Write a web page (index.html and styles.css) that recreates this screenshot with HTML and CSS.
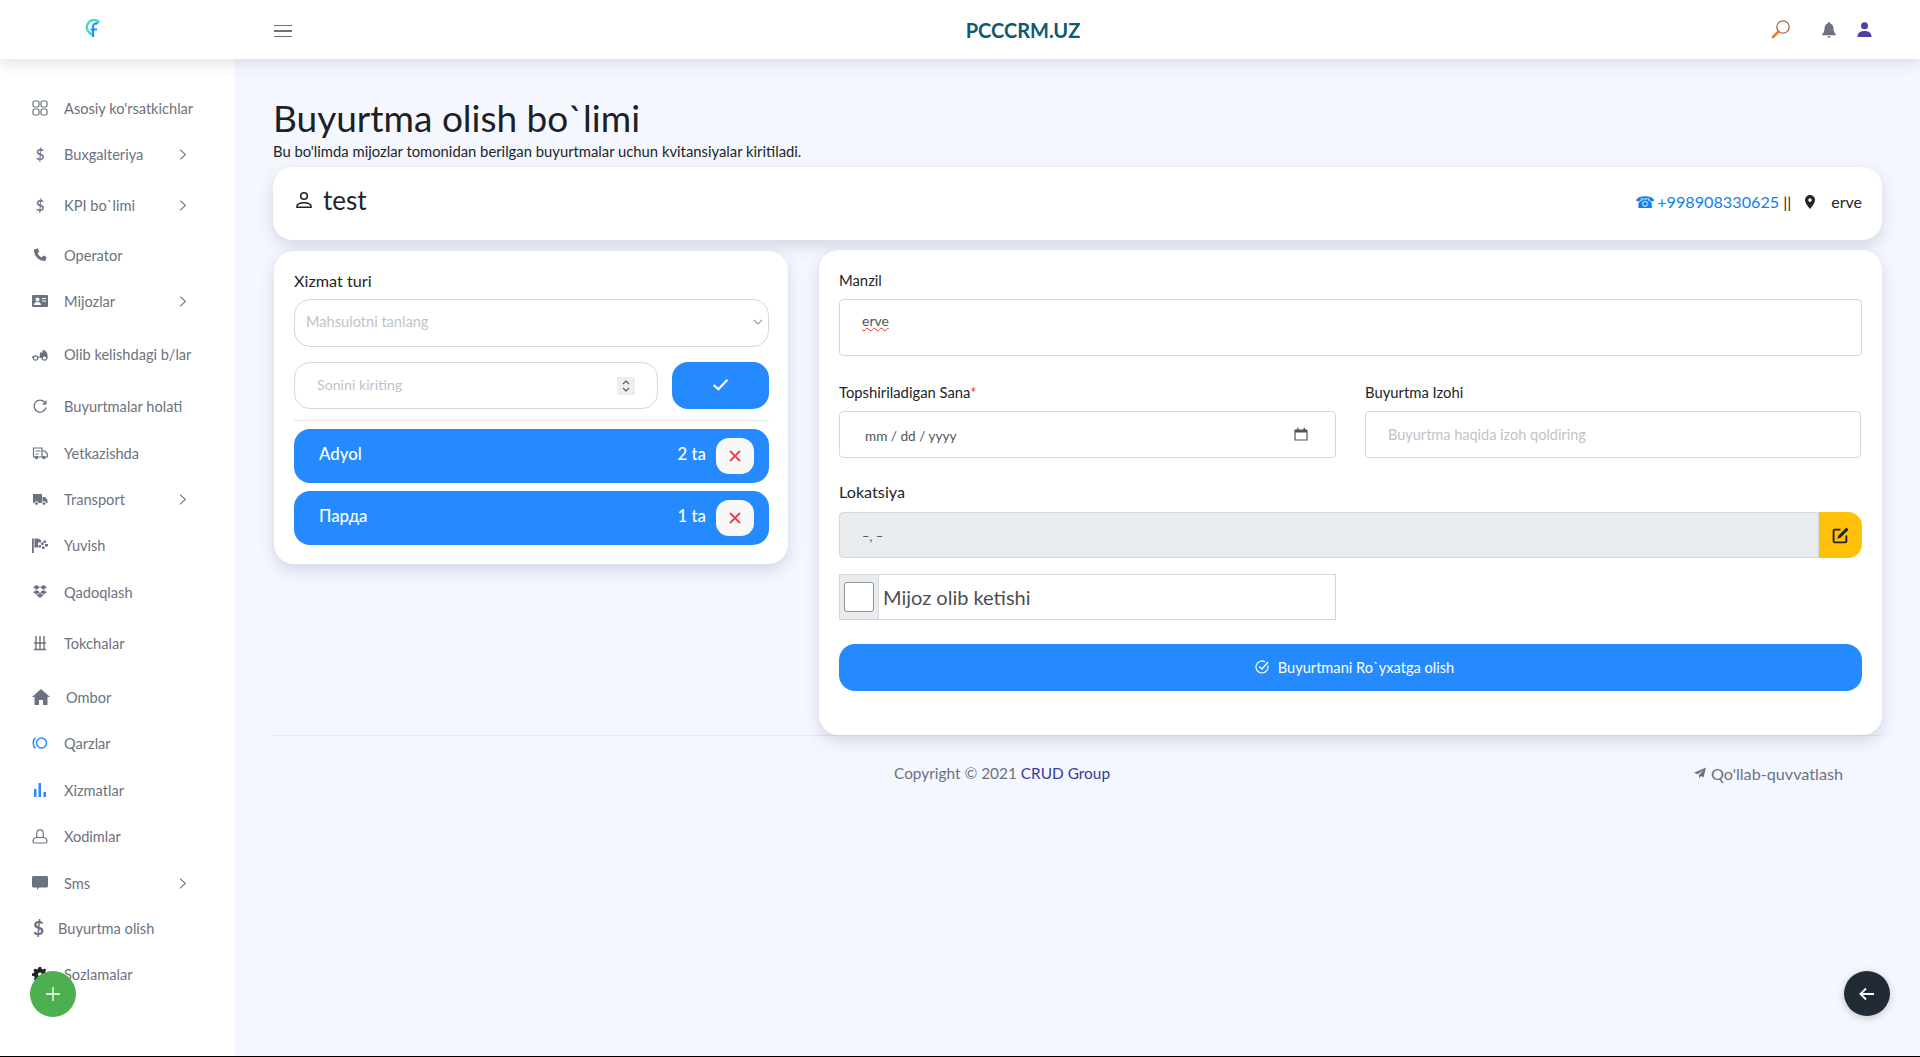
FILE: index.html
```html
<!DOCTYPE html>
<html lang="en">
<head>
  <meta charset="UTF-8" />
  <meta name="viewport" content="width=device-width, initial-scale=1.0"/>
  <title>Buyurtma olish</title>
  <link rel="stylesheet" href="styles.css">
</head>
<body>
  <svg class="sprite" width="0" height="0">
    <symbol id="chev" viewBox="0 0 16 16"><path d="M5 2l6.5 6L5 14" fill="none" stroke="currentColor" stroke-width="1.300"/></symbol>
  </svg>

  <header class="topbar">
    <div class="logo">
      <svg width="18" height="20" viewBox="0 0 18 20"><path d="M14.500 3.500A7.200 7.200 0 1 0 9 15.500" fill="none" stroke="#3fdcc0" stroke-width="2.400"/><path d="M8 18V8c0-3 2-4 5-3.600M5.500 10.500H12" fill="none" stroke="#2a8bff" stroke-width="2.200"/></svg>
    </div>
    <button class="burger"><span></span><span></span><span></span></button>
    <div class="brand">PCCCRM.UZ</div>
    <div class="top-icons">
      <svg class="ti-search" width="20" height="20" viewBox="0 0 20 20"><circle cx="12" cy="8" r="6.200" fill="none" stroke="#a8694c" stroke-width="1.300"/><path d="M7.500 12.500L2 18" stroke="#ee7a2c" stroke-width="2.600" stroke-linecap="round"/></svg>
      <svg class="ti-bell" width="14" height="16" viewBox="0 0 14 16"><path d="M7 0a1.200 1.200 0 0 0-1 1.300C3.600 2 2.500 4 2.500 6.500c0 3-1 4.500-2.300 5.800-.3.400 0 1 .5 1h12.600c.5 0 .8-.6.500-1-1.300-1.300-2.300-2.800-2.300-5.800C11.500 4 10.400 2 8 1.300A1.200 1.200 0 0 0 7 0zM5.500 14.200a1.500 1.500 0 0 0 3 0z" fill="#6b7280"/></svg>
      <svg class="ti-user" width="15" height="15" viewBox="0 0 15 15"><circle cx="7.500" cy="3.800" r="3.500" fill="#4b3fa8"/><path d="M0.500 15c0-4 2.500-6 7-6s7 2 7 6z" fill="#4b3fa8"/></svg>
    </div>
  </header>

  <div class="shell">
    <aside class="sidebar">
      <ul class="menu">
        <li>
          <svg class="ic" viewBox="0 0 16 16"><g fill="none" stroke="currentColor" stroke-width="1.200"><rect x="1" y="1" width="6" height="6" rx="1.500"/><rect x="9" y="1" width="6" height="6" rx="1.500"/><rect x="1" y="9" width="6" height="6" rx="1.500"/><rect x="9" y="9" width="6" height="6" rx="1.500"/></g></svg>
          <span>Asosiy ko'rsatkichlar</span>
        </li>
        <li class="has-sub">
          <b class="ic dollar">$</b><span>Buxgalteriya</span>
          <svg class="chev"><use href="#chev"/></svg>
        </li>
        <li class="has-sub mt5">
          <b class="ic dollar">$</b><span>KPI bo`limi</span>
          <svg class="chev"><use href="#chev"/></svg>
        </li>
        <li class="mt4">
          <svg class="ic" viewBox="0 0 16 16"><path d="M3 2l2.800-.6 1.500 3.300-1.800 1.500c.8 1.800 2.300 3.300 4.200 4.200l1.500-1.800 3.300 1.500-.5 2.700c-.2.700-.8 1.200-1.500 1.200C6.800 14 2 9 2 3.200c0-.6.400-1 1-1.200z" fill="currentColor"/></svg>
          <span>Operator</span>
        </li>
        <li class="has-sub">
          <svg class="ic" viewBox="0 0 16 16"><path fill-rule="evenodd" d="M1 2h14a1 1 0 0 1 1 1v10a1 1 0 0 1-1 1H1a1 1 0 0 1-1-1V3a1 1 0 0 1 1-1zm4.500 2.500a2 2 0 1 0 0 4 2 2 0 0 0 0-4zM2 12h7c0-2-1.300-3-3.500-3S2 10 2 12zm8-7v1h4V5zm0 2.500v1h4v-1z" fill="currentColor"/></svg>
          <span>Mijozlar</span>
          <svg class="chev"><use href="#chev"/></svg>
        </li>
        <li class="mt7">
          <svg class="ic" viewBox="0 0 16 16"><path d="M0 10.500h7v1.500H0zM8 6.500h2.500V4c2.500 0 4.500 1.500 5 4.500V12H7.500z" fill="currentColor"/><circle cx="3.500" cy="12" r="2.200" fill="#fff" stroke="currentColor" stroke-width="1.200"/><circle cx="12.500" cy="12" r="2.200" fill="#fff" stroke="currentColor" stroke-width="1.200"/></svg>
          <span>Olib kelishdagi b/lar</span>
        </li>
        <li class="mt6">
          <svg class="ic" viewBox="0 0 16 16"><path d="M14 9.500A6 6 0 1 1 12.500 4" fill="none" stroke="currentColor" stroke-width="1.300"/><path d="M14.500 2v4.500H10z" fill="currentColor"/></svg>
          <span>Buyurtmalar holati</span>
        </li>
        <li class="mt1">
          <svg class="ic" viewBox="0 0 16 16"><path d="M1.500 3h8.500v9H1.500zM10 6h3l2.300 2.800V12H10z" fill="none" stroke="currentColor" stroke-width="1.200"/><path d="M3.500 6h5M6.500 9h-3" stroke="currentColor" stroke-width="1"/><circle cx="4.500" cy="12.500" r="1.700" fill="currentColor"/><circle cx="12" cy="12.500" r="1.700" fill="currentColor"/></svg>
          <span>Yetkazishda</span>
        </li>
        <li class="has-sub">
          <svg class="ic" viewBox="0 0 16 16"><path d="M1 3h9v9H1zM10.500 6h2.700L15.500 9v3h-5z" fill="currentColor"/><circle cx="4.500" cy="12.500" r="1.900" fill="currentColor" stroke="#fff"/><circle cx="12" cy="12.500" r="1.900" fill="currentColor" stroke="#fff"/></svg>
          <span>Transport</span>
          <svg class="chev"><use href="#chev"/></svg>
        </li>
        <li>
          <svg class="ic" viewBox="0 0 16 16"><path d="M0 1.500h1.800V16H0zM2.500 1.500H6v9H2.500z" fill="currentColor"/><path d="M6 1.500l3 1.500v2.500H6zM9 5.500h2.500V8H9zM11.500 3.500H14V6h-2.500zM13 7h3v2.500h-3zM6.500 8H9v2.500H6.500zM10 9.500h2.500V12H10z" fill="currentColor"/></svg>
          <span>Yuvish</span>
        </li>
        <li class="mt1">
          <svg class="ic" viewBox="0 0 16 16"><path d="M4.500 1L8 3.300 4.500 5.700 1 3.300zM11.500 1L15 3.300l-3.500 2.400L8 3.300zM4.500 5.900L8 8.300l-3.500 2.300L1 8.300zM11.500 5.900L15 8.300l-3.500 2.300L8 8.300zM4.500 11.300L8 9l3.500 2.300L8 14z" fill="currentColor"/></svg>
          <span>Qadoqlash</span>
        </li>
        <li class="mt5">
          <svg class="ic" viewBox="0 0 16 16"><path d="M2 8h12M2 14.500h12M4 1v13.500M8 1v13.500M12 1v13.500" fill="none" stroke="currentColor" stroke-width="1.400"/></svg>
          <span>Tokchalar</span>
        </li>
        <li class="mt8 wide-ic">
          <svg class="ic" viewBox="0 0 18 16"><path d="M9 0L0 8h2.500v8h4.500v-5h4v5h4.500V8H18z" fill="currentColor"/></svg>
          <span>Ombor</span>
        </li>
        <li>
          <svg class="ic" viewBox="0 0 16 16"><circle cx="9.500" cy="8" r="5" fill="none" stroke="#2a8bff" stroke-width="1.500"/><path d="M3.500 2.500C.5 5 .5 11 3.500 13.500" fill="none" stroke="#2a8bff" stroke-width="1.500"/></svg>
          <span>Qarzlar</span>
        </li>
        <li class="mt1">
          <svg class="ic" viewBox="0 0 16 16"><path d="M2 7h2.500v8H2zM6.500 1H9v14H6.500zM11.500 10H14v5h-2.500z" fill="#2a8bff"/></svg>
          <span>Xizmatlar</span>
        </li>
        <li>
          <svg class="ic" viewBox="0 0 16 16"><path d="M4.800 9.500V5a3.200 3.200 0 0 1 6.400 0v4.500M1 13.500c0-2.600 1.500-4 4-4h6c2.500 0 4 1.400 4 4 0 .9-.6 1.500-1.500 1.500h-11C1.600 15 1 14.400 1 13.500z" fill="none" stroke="currentColor" stroke-width="1.200"/></svg>
          <span>Xodimlar</span>
        </li>
        <li class="has-sub mt1">
          <svg class="ic" viewBox="0 0 16 16"><path d="M1.500 1h13c.8 0 1.500.7 1.500 1.500V11c0 .8-.7 1.500-1.500 1.500H7L5 15v-2.500H1.500C.7 12.500 0 11.800 0 11V2.500C0 1.700.7 1 1.500 1z" fill="currentColor"/></svg>
          <span>Sms</span>
          <svg class="chev"><use href="#chev"/></svg>
        </li>
        <li class="narrow-ic">
          <b class="ic dollar big">$</b><span>Buyurtma olish</span>
        </li>
        <li>
          <svg class="ic dark" viewBox="0 0 16 16"><path d="M6.800 1h2.400l.4 1.800 1.300.6 1.600-1 1.700 1.700-1 1.600.6 1.300 1.800.4v2.400l-1.800.4-.6 1.300 1 1.600-1.700 1.700-1.600-1-1.300.6-.4 1.800H6.800l-.4-1.800-1.300-.6-1.600 1-1.700-1.700 1-1.600-.6-1.300L0 9.800V7.400l1.800-.4.600-1.300-1-1.600 1.700-1.700 1.600 1 1.300-.6z" fill="currentColor"/><circle cx="8" cy="8.500" r="2" fill="#fff"/></svg>
          <span>Sozlamalar</span>
        </li>
      </ul>
    </aside>

    <main class="content">
      <h1 class="page-title">Buyurtma olish bo`limi</h1>
      <p class="page-sub">Bu bo'limda mijozlar tomonidan berilgan buyurtmalar uchun kvitansiyalar kiritiladi.</p>

      <section class="card info-card">
        <div class="client">
          <svg width="18" height="18" viewBox="0 0 18 18"><circle cx="9" cy="5" r="3.300" fill="none" stroke="#212529" stroke-width="1.600"/><path d="M2 15.500c0-2.600 2.500-3.800 7-3.800s7 1.200 7 3.800v.7H2z" fill="none" stroke="#212529" stroke-width="1.600"/></svg>
          <span>test</span>
        </div>
        <div class="contact">
          <a class="phone"><span class="phone-ic">☎</span>+998908330625</a>
          <span class="sep">||</span>
          <svg class="pin" width="12" height="14" viewBox="0 0 12 14"><path fill-rule="evenodd" d="M6 0a5 5 0 0 1 5 5c0 3.500-5 9-5 9S1 8.500 1 5a5 5 0 0 1 5-5zm0 3.300a1.800 1.800 0 1 0 0 3.600 1.800 1.800 0 0 0 0-3.600z" fill="#212529"/></svg>
          <span class="place">erve</span>
        </div>
      </section>

      <div class="columns">
        <section class="card order-card">
          <label class="lbl-big">Xizmat turi</label>
          <div class="fake-select">
            <span>Mahsulotni tanlang</span>
            <svg width="10" height="10" viewBox="0 0 10 10"><path d="M1 3l4 4 4-4" fill="none" stroke="#9aa0a6" stroke-width="1.200"/></svg>
          </div>
          <div class="qty-row">
            <div class="qty-input">
              <span>Sonini kiriting</span>
              <i class="spin"><svg width="10" height="14" viewBox="0 0 10 14"><path d="M2 5l3-3 3 3M2 9l3 3 3-3" fill="none" stroke="#555" stroke-width="1.100"/></svg></i>
            </div>
            <button class="qty-ok"><svg width="17" height="13" viewBox="0 0 16 12"><path d="M1.500 6.500L6 10.500 14.500 1.500" fill="none" stroke="#fff" stroke-width="2"/></svg></button>
          </div>
          <hr class="sep-line">
          <div class="item">
            <span class="item-name">Adyol</span>
            <span class="item-qty">2 ta</span>
            <button class="item-del"><svg width="12" height="12" viewBox="0 0 12 12"><path d="M1 1l10 10M11 1L1 11" stroke="#ee3b46" stroke-width="1.800"/></svg></button>
          </div>
          <div class="item">
            <span class="item-name">Парда</span>
            <span class="item-qty">1 ta</span>
            <button class="item-del"><svg width="12" height="12" viewBox="0 0 12 12"><path d="M1 1l10 10M11 1L1 11" stroke="#ee3b46" stroke-width="1.800"/></svg></button>
          </div>
        </section>

        <section class="card form-card">
          <label class="lbl">Manzil</label>
          <div class="field address"><span class="typo">erve</span></div>

          <div class="two-col mt-date">
            <div>
              <label class="lbl">Topshiriladigan Sana<em>*</em></label>
              <div class="field date-field">
                <span>mm / dd / yyyy</span>
                <svg width="14" height="14" viewBox="0 0 14 14"><path d="M1 3.500h12v9.500H1z" fill="none" stroke="#555" stroke-width="1.200"/><path d="M1 2.500h12v3H1zM3 .8h1.500v2H3zM9.500.8H11v2H9.500z" fill="#555"/></svg>
              </div>
            </div>
            <div>
              <label class="lbl">Buyurtma Izohi</label>
              <div class="field note-field">Buyurtma haqida izoh qoldiring</div>
            </div>
          </div>

          <label class="lbl-big mt-loc">Lokatsiya</label>
          <div class="loc-row">
            <div class="loc-input">–, –</div>
            <button class="loc-btn"><svg width="17" height="17" viewBox="0 0 16 16"><path d="M8 2.500H2.500c-.6 0-1 .4-1 1v10c0 .6.400 1 1 1h10c.6 0 1-.4 1-1V8" fill="none" stroke="#212529" stroke-width="1.800"/><path d="M13.500.5l2 2L8 10l-3 1 1-3z" fill="#212529"/></svg></button>
          </div>

          <div class="two-col mt-check">
            <div class="check-box">
              <span class="check-pre"><i></i></span>
              <span class="check-text">Mijoz olib ketishi</span>
            </div>
          </div>

          <button class="submit">
            <svg width="14" height="14" viewBox="0 0 14 14"><path d="M12.800 5.500A6 6 0 1 1 10 1.800" fill="none" stroke="#fff" stroke-width="1.200"/><path d="M4 6.500l3 2.500 6-7" fill="none" stroke="#fff" stroke-width="1.300"/></svg>
            <span>Buyurtmani Ro`yxatga olish</span>
          </button>
        </section>
      </div>

      <footer class="foot">
        <span class="copy">Copyright © 2021 <a>CRUD Group</a></span>
        <span class="help">
          <svg width="12" height="12" viewBox="0 0 12 12"><path d="M12 .5L0 5.800l3.500 1.500L9.500 3 5 8v3.500L7 9l2.500 1.500z" fill="#6b7280"/></svg>
          Qo'llab-quvvatlash
        </span>
      </footer>
    </main>
  </div>

  <button class="fab-add"><svg width="16" height="16" viewBox="0 0 16 16"><path d="M8 1v14M1 8h14" stroke="#fff" stroke-width="1.300"/></svg></button>
  <button class="fab-back"><svg width="16" height="14" viewBox="0 0 16 14"><path d="M15 7H2M7 1.500L1.500 7 7 12.500" fill="none" stroke="#fff" stroke-width="1.800"/></svg></button>
</body>
</html>
```

FILE: styles.css
```css
* { margin: 0; padding: 0; box-sizing: border-box; }
html { background: #000; }
body {
  font-family: "Lato", "Noto Sans", sans-serif;
  font-size: 14.6px;
  color: #212529;
  background: #f5f7fe;
  height: 1056px;
  overflow: hidden;
  position: relative;
}
button { border: none; cursor: pointer; }
.sprite { position: absolute; }

/* top bar */
.topbar {
  height: 59px;
  background: #fff;
  display: flex;
  align-items: center;
  box-shadow: 0 4px 14px rgba(40, 50, 100, .14);
  position: relative;
  z-index: 3;
}
.logo { width: 186px; padding-left: 85px; padding-top: 2px; }
.burger {
  width: 18px;
  margin-left: 88px;
  background: none;
  display: flex;
  flex-direction: column;
  gap: 4px;
  margin-top: 3px;
}
.burger span { display: block; height: 1.6px; background: #6b7280; }
.brand {
  flex: 1;
  text-align: center;
  font-size: 20px;
  font-weight: 700;
  color: #0f5a6e;
  padding-right: 17px;
}
.top-icons { display: flex; align-items: center; padding-right: 48px; }
.ti-search { margin-right: 31px; margin-top: -2px; }
.ti-bell { margin-right: 21px; }

/* sidebar */
.shell { display: flex; height: 997px; }
.sidebar { width: 234px; background: #fff; flex-shrink: 0; }
.menu { list-style: none; padding: 26px 0 0 32px; }
.menu li {
  height: 46px;
  display: flex;
  align-items: center;
  color: #6b7280;
}
.mt1 { margin-top: 1px; }
.mt4 { margin-top: 4px; }
.mt5 { margin-top: 5px; }
.mt6 { margin-top: 6px; }
.mt7 { margin-top: 7px; }
.mt8 { margin-top: 8px; }
.ic { width: 16px; height: 16px; margin-right: 16px; flex-shrink: 0; color: #6b7280; }
.ic.dark { color: #212529; }
.dollar { font-weight: 600; text-align: center; font-size: 15px; line-height: 16px; }
.dollar.big { width: 10px; font-size: 19px; font-weight: 700; margin-right: 15px; margin-left: 1px; }
.menu .narrow-ic { margin-top: -1px; }
.wide-ic .ic { width: 18px; margin-right: 16px; }
.chev { width: 13px; height: 13px; color: #6b7280; position: absolute; left: 176px; }

/* main area */
.content { flex: 1; padding: 0 38px 0 39px; min-width: 0; }
.page-title {
  font-size: 37px;
  font-weight: 400;
  line-height: 44px;
  margin-top: 37px;
  color: #1c2127;
}
.page-sub { font-size: 14.8px; font-weight: 400; line-height: 20px; margin-top: 1px; }
.card {
  background: #fff;
  border-radius: 20px;
  box-shadow: 0 6px 16px rgba(40, 50, 100, .16);
}
.info-card {
  height: 73px;
  margin-top: 6px;
  display: flex;
  align-items: center;
  justify-content: space-between;
  padding: 0 20px 0 22px;
}
.client { display: flex; align-items: center; gap: 10px; font-size: 26px; padding-bottom: 7px; }
.contact { display: flex; align-items: center; font-size: 16px; padding-bottom: 4px; }
.phone { color: #117fe6; font-size: 16.200px; }
.phone-ic { margin-right: 2px; }
.sep { margin-left: 4px; margin-right: 13px; }
.pin { margin-right: 15px; }

.columns { display: flex; justify-content: space-between; align-items: flex-start; margin-top: 10px; }
.order-card { width: 514px; padding: 20px 19px 19px 20px; margin-left: 1px; margin-top: 1px; }
.form-card { width: 1063px; padding: 20px 20px 44px; }

.lbl-big { display: block; font-size: 16.200px; line-height: 20px; }
.lbl { display: block; font-size: 14.800px; line-height: 20px; margin-bottom: 9px; }
.lbl em { color: #e8394a; font-style: normal; }

.fake-select {
  height: 48px;
  margin-top: 8px;
  border: 1px solid #d5d7da;
  border-radius: 16px;
  display: flex;
  align-items: center;
  justify-content: space-between;
  padding: 0 5px 3px 11px;
  color: #bfc3c8;
}
.qty-row { display: flex; justify-content: space-between; margin-top: 15px; }
.qty-input {
  width: 364px;
  height: 47px;
  border: 1px solid #d5d7da;
  border-radius: 16px;
  display: flex;
  align-items: center;
  justify-content: space-between;
  padding: 0 22px;
  font-size: 14.200px;
  color: #bfc3c8;
}
.qty-input span { padding-bottom: 2px; }
.spin { width: 18px; height: 18px; background: #eceef0; display: flex; align-items: center; justify-content: center; }
.qty-ok {
  width: 97px;
  height: 47px;
  background: #268aff;
  border-radius: 16px;
}
.sep-line { border: none; border-top: 1px solid #e3e5e8; margin: 11px 0 8px; }
.item {
  height: 54px;
  margin-bottom: 8px;
  background: #268aff;
  border-radius: 16px;
  color: #fff;
  display: flex;
  align-items: center;
  padding: 0 15px 0 25px;
  font-size: 16.800px;
  font-weight: 500;
}
.item:last-child { margin-bottom: 0; }
.item-name { flex: 1; padding-bottom: 6px; }
.item-qty { margin-right: 10px; padding-bottom: 6px; }
.item-del {
  width: 38px;
  height: 36px;
  background: #f8f8f8;
  border-radius: 13px;
  display: flex;
  align-items: center;
  justify-content: center;
}

.field {
  border: 1px solid #d5d7da;
  border-radius: 4px;
  background: #fff;
}
.address { height: 57px; padding: 12px 22px; font-size: 14px; color: #555; }
.typo { text-decoration: underline wavy #e03030 1px; }
.two-col { display: grid; grid-template-columns: 497px 496px; column-gap: 29px; }
.mt-date { margin-top: 26px; }
.date-field {
  height: 47px;
  display: flex;
  align-items: center;
  justify-content: space-between;
  padding: 2px 27px 0 25px;
  font-size: 13.600px;
  color: #555;
}
.date-field svg { margin-top: -3px; }
.note-field {
  height: 47px;
  display: flex;
  align-items: center;
  padding-left: 22px;
  font-size: 14.500px;
  color: #bfc3c8;
}
.mt-loc { margin-top: 24px; margin-bottom: 10px; }
.loc-row { display: flex; height: 46px; }
.loc-input {
  flex: 1;
  background: #e9ecef;
  border: 1px solid #d5d7da;
  border-radius: 4px 0 0 4px;
  display: flex;
  align-items: center;
  padding: 2px 0 0 22px;
  color: #555;
  font-size: 13px;
}
.loc-btn {
  width: 43px;
  background: #ffc107;
  border-radius: 0 14px 14px 0;
  display: flex;
  align-items: center;
  justify-content: center;
}
.mt-check { margin-top: 16px; }
.check-box {
  height: 46px;
  border: 1px solid #d5d7da;
  display: flex;
  align-items: stretch;
}
.check-pre {
  width: 39px;
  background: #e9ecef;
  border-right: 1px solid #d5d7da;
  display: flex;
  align-items: center;
  justify-content: center;
}
.check-pre i {
  width: 30px;
  height: 30px;
  background: #fff;
  border: 1px solid #8f9499;
  border-radius: 3px;
}
.check-text { display: flex; align-items: center; padding-left: 4px; font-size: 20px; color: #4a4f55; }
.submit {
  width: 100%;
  height: 47px;
  margin-top: 24px;
  background: #268aff;
  border-radius: 16px;
  color: #fff;
  font-family: inherit;
  font-size: 14.600px;
  display: flex;
  align-items: center;
  justify-content: center;
  gap: 9px;
  padding-left: 8px;
  padding-bottom: 1px;
}

.foot {
  display: flex;
  border-top: 1px solid #e6e8ef;
  height: 75px;
  align-items: center;
  color: #6b7280;
}
.copy { margin-left: 621px; font-size: 15.400px; }
.copy a { color: #3b3a9e; }
.help { margin-left: auto; margin-right: 39px; display: flex; align-items: center; gap: 5px; font-size: 16.200px; }

/* floating buttons */
.fab-add, .fab-back {
  position: absolute;
  border-radius: 50%;
  display: flex;
  align-items: center;
  justify-content: center;
}
.fab-add { left: 30px; top: 971px; width: 46px; height: 46px; background: #4caf50; }
.fab-back { left: 1844px; top: 971px; width: 46px; height: 45px; background: #212b36; box-shadow: 0 2px 8px rgba(0, 0, 0, .2); }
```
